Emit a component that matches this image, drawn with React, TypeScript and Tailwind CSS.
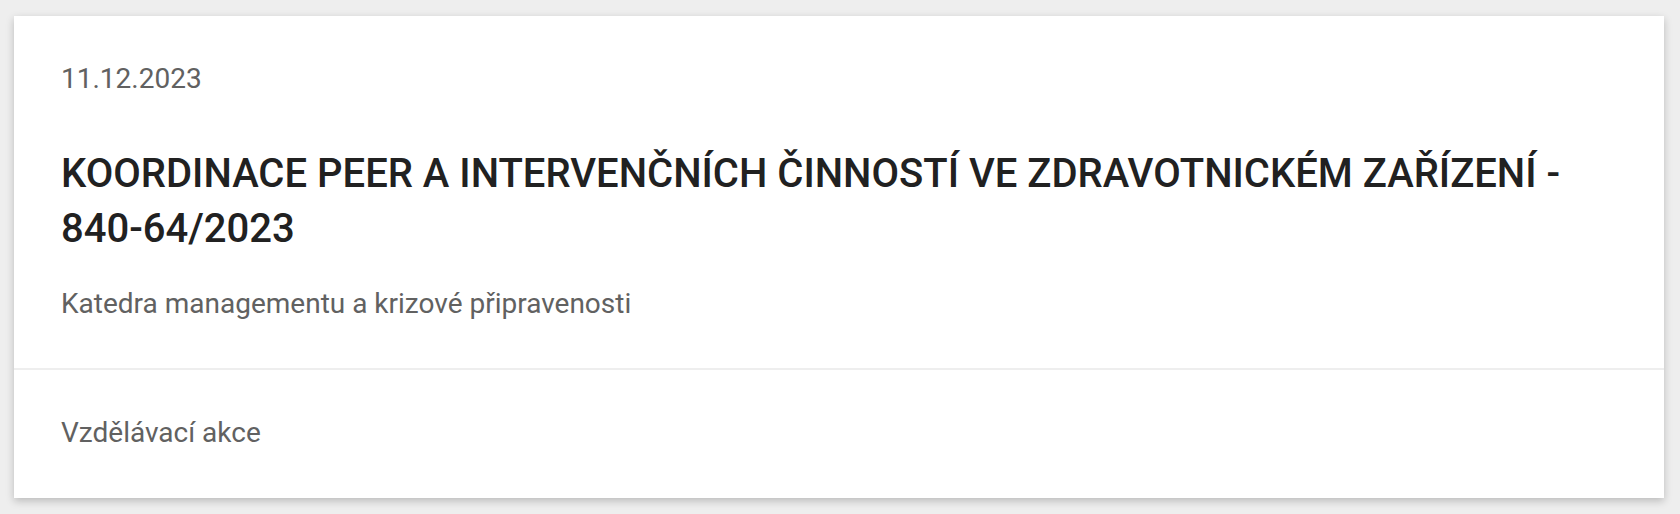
export default function App() {
  return (
    <div className="min-h-[514px] bg-[#eeeeee] pt-[16px] pb-[16px] pl-[14px] pr-[16px] font-['Roboto','Liberation_Sans',sans-serif]">
      <div className="bg-white shadow-[0_3px_8px_rgba(0,0,0,0.22)]">
        {/* Hlavička karty */}
        <div className="px-[47px] pt-[43px] pb-[44px]">
          <div className="text-[28px] leading-[40px] text-[#616161]">11.12.2023</div>
          <h2 className="mt-[47px] text-[40px] leading-[55px] font-medium text-[#212121]">
            KOORDINACE PEER A INTERVENČNÍCH ČINNOSTÍ VE ZDRAVOTNICKÉM ZAŘÍZENÍ - 840-64/2023
          </h2>
          <div className="mt-[28px] text-[28px] leading-[40px] text-[#616161]">
            Katedra managementu a krizové připravenosti
          </div>
        </div>
        <div className="h-[2px] bg-[#eeeeee]" />
        {/* Pata karty */}
        <div className="px-[47px] pt-[43px] pb-[45px]">
          <div className="text-[28px] leading-[40px] text-[#616161]">Vzdělávací akce</div>
        </div>
      </div>
    </div>
  )
}
